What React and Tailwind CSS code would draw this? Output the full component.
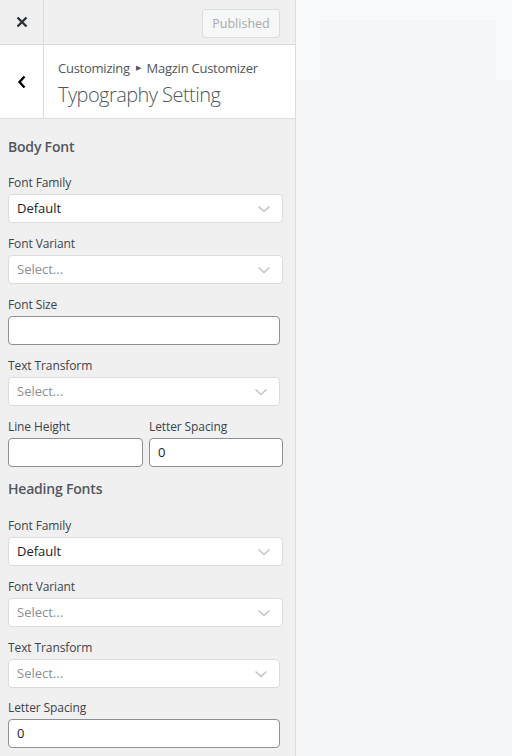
import { useState } from 'react'

const Chevron = () => (
  <svg width="14" height="8" viewBox="0 0 14 8" className="shrink-0">
    <path d="M1.5 1.5 L7 6.5 L12.5 1.5" fill="none" stroke="#c3c4c7" strokeWidth="1.6" />
  </svg>
)

function SelectBox({ value, placeholder, wide = true }) {
  return (
    <div className={`${wide ? 'w-[275px]' : 'w-[272px]'} h-[29px] bg-white border border-[#dcdcde] rounded-[4px] flex items-center justify-between pl-[8px] pr-[11px]`}>
      <span className={`text-[13px] ${value ? 'text-[#1d2327]' : 'text-[#8c8f94]'}`}>{value || placeholder}</span>
      <Chevron />
    </div>
  )
}

function TextBox({ value = '', className = 'w-[272px]' }) {
  return (
    <div className={`${className} h-[29px] bg-white border border-[#8c8f94] rounded-[4px] flex items-center px-[8px] text-[13px] text-[#1d2327]`}>
      {value}
    </div>
  )
}

function Label({ children }) {
  return <div className="text-[12px] leading-[16px] tracking-[-0.1px] text-[#3c434a] mb-[3px]">{children}</div>
}

function Field({ label, children }) {
  return (
    <div className="mb-[13px]">
      <Label>{label}</Label>
      {children}
    </div>
  )
}

export default function App() {
  const [published] = useState(true)

  return (
    <div className="w-[512px] h-[756px] flex overflow-hidden bg-[#f6f7f9]" style={{ fontFamily: '"Open Sans", "Noto Sans", sans-serif' }}>
      {/* Sidebar */}
      <div className="w-[296px] h-full bg-[#f0f0f1] border-r border-[#dcdcde] flex flex-col shrink-0">
        {/* Top bar */}
        <div className="h-[45px] flex border-b border-[#dcdcde] shrink-0">
          <div className="w-[44px] border-r border-[#dcdcde] flex items-center justify-center">
            <svg width="12" height="12" viewBox="0 0 12 12">
              <path d="M1.5 1.5 L10.5 10.5 M10.5 1.5 L1.5 10.5" stroke="#2c3338" strokeWidth="2.4" />
            </svg>
          </div>
          <div className="flex-1 flex items-start justify-end pt-[9px] pr-[15px]">
            <button disabled className="w-[78px] h-[29px] pt-[1px] rounded-[3px] border border-[#dcdcde] bg-[#f6f7f7] text-[#a7aaad] text-[12.5px]">
              {published ? 'Published' : 'Publish'}
            </button>
          </div>
        </div>

        {/* Section header */}
        <div className="h-[74px] flex bg-white border-b border-[#dcdcde] shrink-0">
          <div className="w-[44px] border-r border-[#dcdcde] flex items-center justify-center">
            <svg width="10" height="14" viewBox="0 0 10 14">
              <path d="M7.5 1.5 L2.5 7 L7.5 12.5" fill="none" stroke="#000" strokeWidth="2.4" />
            </svg>
          </div>
          <div className="flex-1 pl-[14px] pt-[14px]">
            <div className="text-[13px] leading-[18px] tracking-[-0.25px] text-[#50575e] flex items-center">
              Customizing
              <span className="text-[7px] mx-[6px] text-[#50575e]">▶</span>
              Magzin Customizer
            </div>
            <div className="text-[20px] leading-[28px] font-light tracking-[-0.55px] text-[#50575e] mt-[4px]">Typography Setting</div>
          </div>
        </div>

        {/* Controls */}
        <div className="flex-1 px-[8px] pt-[19px]">
          <div className="text-[14px] leading-[18px] font-semibold tracking-[-0.2px] text-[#50575e] mb-[19px]">Body Font</div>
          <Field label="Font Family"><SelectBox value="Default" /></Field>
          <Field label="Font Variant"><SelectBox placeholder="Select..." /></Field>
          <Field label="Font Size"><TextBox /></Field>
          <Field label="Text Transform"><SelectBox placeholder="Select..." wide={false} /></Field>
          <div className="flex gap-[6px] mb-[13px]">
            <div>
              <Label>Line Height</Label>
              <TextBox className="w-[135px]" />
            </div>
            <div>
              <Label>Letter Spacing</Label>
              <TextBox value="0" className="w-[134px]" />
            </div>
          </div>
          <div className="text-[14px] leading-[18px] font-semibold tracking-[-0.2px] text-[#50575e] mb-[20px]">Heading Fonts</div>
          <Field label="Font Family"><SelectBox value="Default" /></Field>
          <Field label="Font Variant"><SelectBox placeholder="Select..." /></Field>
          <div className="mb-[12px]">
            <Label>Text Transform</Label>
            <SelectBox placeholder="Select..." wide={false} />
          </div>
          <Field label="Letter Spacing"><TextBox value="0" /></Field>
        </div>
      </div>

      {/* Preview area */}
      <div className="flex-1 h-full flex flex-col">
        <div className="h-[80px] bg-[#f9fafb] flex items-end px-[25px]">
          <div className="w-[174px] h-[60px] bg-[#f6f7f9] border-t border-x border-[#f3f4f6]" />
        </div>
        <div className="flex-1 bg-[#f6f7f9]" />
      </div>
    </div>
  )
}
